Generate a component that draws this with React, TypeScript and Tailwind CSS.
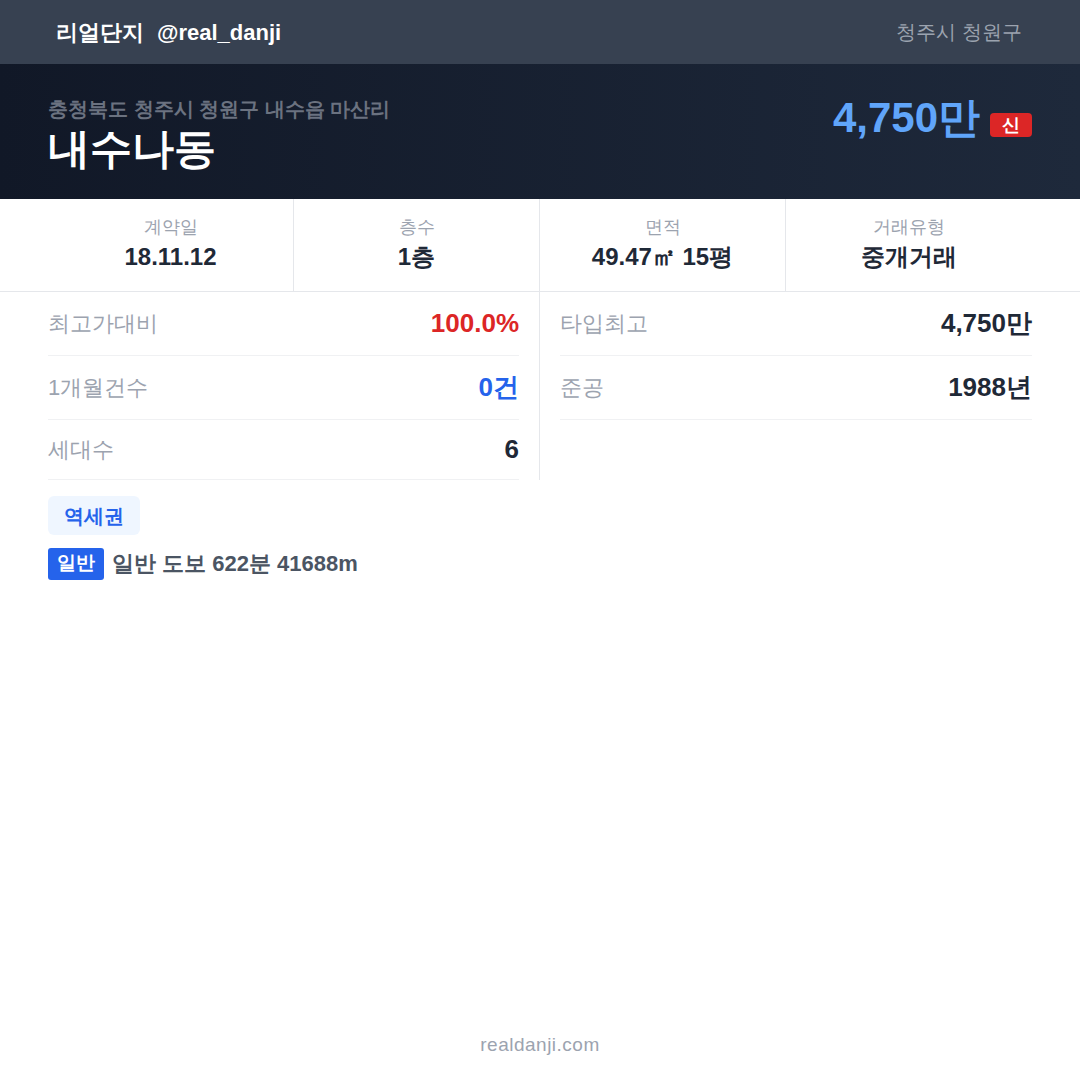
import React from 'react';

const font = { fontFamily: '"Liberation Sans", sans-serif' };

const stats = [
  { label: '계약일', value: '18.11.12' },
  { label: '층수', value: '1층' },
  { label: '면적', value: '49.47㎡ 15평' },
  { label: '거래유형', value: '중개거래' },
];

export default function App() {
  return (
    <div className="w-[1080px] h-[1080px] bg-white flex flex-col" style={font}>
      {/* Top bar */}
      <div className="h-16 bg-[#374151] flex items-center justify-between pl-14 pr-[58px]">
        <div className="text-white font-bold text-[22px] flex gap-[13px]">
          <span>리얼단지</span>
          <span>@real_danji</span>
        </div>
        <div className="text-[#9ca3af] text-[20px]">청주시 청원구</div>
      </div>

      {/* Hero */}
      <div className="h-[135px] bg-gradient-to-r from-[#111827] to-[#1e293b] px-12 flex justify-between">
        <div className="pt-[31px]">
          <div className="text-[#6b7280] text-[20px] font-bold leading-[28px]">충청북도 청주시 청원구 내수읍 마산리</div>
          <div className="text-white text-[42px] font-bold leading-[52px]">내수나동</div>
        </div>
        <div className="pt-[28px] flex items-start gap-[10px]">
          <span className="text-[#60a5fa] text-[42px] font-bold leading-[52px]">4,750만</span>
          <span className="mt-[21px] bg-[#dc2626] text-white text-[18px] font-bold rounded-[4px] h-6 w-[42px] flex items-center justify-center">신</span>
        </div>
      </div>

      {/* Stats */}
      <div className="border-b border-[#e5e7eb] px-12 grid grid-cols-4 h-[93px]">
        {stats.map((s, i) => (
          <div
            key={s.label}
            className={`flex flex-col items-center pt-[16px] ${i < 3 ? 'border-r border-[#e5e7eb]' : ''}`}
          >
            <span className="text-[#9ca3af] text-[18px] leading-[24px]">{s.label}</span>
            <span className="text-[#1f2937] text-[24px] font-bold leading-[36px]">{s.value}</span>
          </div>
        ))}
      </div>

      {/* Details */}
      <div className="px-12 grid grid-cols-2">
        <div className="border-r border-[#e5e7eb] pr-5">
          <div className="h-16 flex items-center justify-between border-b border-[#f0f1f3]">
            <span className="text-[#9ca3af] text-[22px]">최고가대비</span>
            <span className="text-[#dc2626] text-[26px] font-bold">100.0%</span>
          </div>
          <div className="h-16 flex items-center justify-between border-b border-[#f0f1f3]">
            <span className="text-[#9ca3af] text-[22px]">1개월건수</span>
            <span className="text-[#2563eb] text-[26px] font-bold">0건</span>
          </div>
          <div className="h-[60px] flex items-center justify-between border-b border-[#f0f1f3]">
            <span className="text-[#9ca3af] text-[22px]">세대수</span>
            <span className="text-[#1f2937] text-[26px] font-bold">6</span>
          </div>
        </div>
        <div className="pl-5">
          <div className="h-16 flex items-center justify-between border-b border-[#f0f1f3]">
            <span className="text-[#9ca3af] text-[22px]">타입최고</span>
            <span className="text-[#1f2937] text-[26px] font-bold">4,750만</span>
          </div>
          <div className="h-16 flex items-center justify-between border-b border-[#f0f1f3]">
            <span className="text-[#9ca3af] text-[22px]">준공</span>
            <span className="text-[#1f2937] text-[26px] font-bold">1988년</span>
          </div>
        </div>
      </div>

      {/* Station */}
      <div className="px-12 pt-4 flex flex-col items-start gap-3">
        <span className="bg-[#eff6ff] text-[#2563eb] text-[20px] font-bold rounded-[6px] h-[39px] px-4 flex items-center">역세권</span>
        <div className="flex items-center gap-2">
          <span className="bg-[#2563eb] text-white text-[19px] font-bold rounded-[3px] h-8 w-14 flex items-center justify-center">일반</span>
          <span className="text-[#4b5563] text-[22px] font-bold">일반 도보 622분 41688m</span>
        </div>
      </div>

      <div className="flex-1" />
      <div className="text-center text-[#9ca3af] text-[19px] tracking-[0.5px] pb-[21px]">realdanji.com</div>
    </div>
  );
}
